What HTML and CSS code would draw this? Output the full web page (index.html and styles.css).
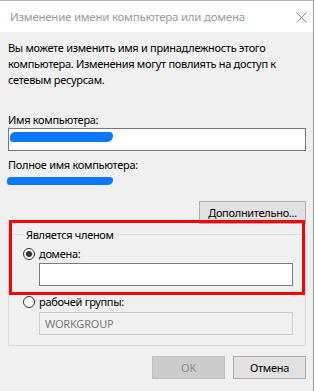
FILE: index.html
```html
<!DOCTYPE html>
<html lang="ru">
<head>
<meta charset="utf-8">
<link rel="stylesheet" href="styles.css">
</head>
<body>
<div class="window">
  <div class="titlebar">
    <span class="title">Изменение имени компьютера или домена</span>
    <svg class="close" width="11" height="11" viewBox="0 0 11 11"><path d="M0.5 0.5 L10.5 10.5 M10.5 0.5 L0.5 10.5" stroke="#8c8c8c" stroke-width="1" fill="none"/></svg>
  </div>
  <div class="body">
    <p class="intro">Вы можете изменить имя и принадлежность этого<br>компьютера. Изменения могут повлиять на доступ к<br>сетевым ресурсам.</p>
    <div class="label label-name">Имя компьютера:</div>
    <div class="input input-name"><span class="scribble scribble-a"></span></div>
    <div class="label label-full">Полное имя компьютера:</div>
    <div class="scribble scribble-b"></div>
    <div class="more-row"><button class="btn btn-more">Дополнительно...</button></div>
    <fieldset class="group">
      <legend class="legend">Является членом</legend>
      <div class="radio-row row-domain"><span class="radio checked"></span>домена:</div>
      <div class="input input-domain"></div>
      <div class="radio-row row-wg"><span class="radio"></span>рабочей группы:</div>
      <div class="input input-wg disabled">WORKGROUP</div>
    </fieldset>
    <div class="actions">
      <button class="btn btn-ok" disabled>OK</button>
      <button class="btn btn-cancel">Отмена</button>
    </div>
  </div>
  <div class="highlight"></div>
</div>
</body>
</html>
```

FILE: styles.css
```css
* { box-sizing: border-box; }
html, body { margin: 0; padding: 0; }
body {
  width: 314px;
  height: 391px;
  overflow: hidden;
  background: #f0f0f0;
  font-family: "Noto Sans", "Open Sans", sans-serif;
  font-size: 11px;
  letter-spacing: -0.3px;
  color: #000;
}
.window {
  position: relative;
  width: 314px;
  height: 391px;
  background: #f0f0f0;
  border-top: 1px solid #b4b4b4;
  border-right: 1px solid #9a9a9a;
}
.titlebar {
  height: 31px;
  background: #fff;
  display: flex;
  align-items: center;
  justify-content: space-between;
  padding: 0 6px 0 10px;
}
.title {
  font-size: 11.5px;
  color: #9a9a9a;
  letter-spacing: -0.25px;
}
.close { display: block; margin-top: 1px; }
.body {
  padding: 0 7px 0 8px;
}
.intro {
  margin: 8px 0 0;
  line-height: 16px;
}
.label {
  line-height: 16px;
}
.label-name { margin-top: 24px; }
.input {
  height: 23px;
  background: #fff;
  border: 1px solid #7a7a7a;
}
.input-name {
  padding: 3px 0 0 1px;
}
.scribble {
  display: block;
  background: #0b78ff;
  border-radius: 5px 4px 6px 3px;
}
.scribble-a { width: 103px; height: 10px; }
.label-full { margin-top: 6px; }
.scribble-b {
  margin: 4px 0 0 -1px;
  width: 106px;
  height: 8px;
}
.more-row {
  display: flex;
  justify-content: flex-end;
  margin-top: 16px;
}
.btn {
  height: 23px;
  background: #e1e1e1;
  border: 1px solid #adadad;
  font-family: inherit;
  font-size: 11px;
  letter-spacing: -0.3px;
  color: #000;
  padding: 0;
  margin: 0;
}
.btn-more { width: 107px; }
.group {
  margin: 4px 0 0;
  padding: 5px 12px 10px 14px;
  border: 1px solid #dcdcdc;
  min-width: 0;
}
.legend {
  padding: 0 2px;
  margin-left: 1px;
  line-height: 13px;
}
.radio-row {
  display: flex;
  align-items: center;
  height: 16px;
  line-height: 16px;
}
.radio {
  width: 12px;
  height: 12px;
  border: 1px solid #333;
  border-radius: 50%;
  background: #fff;
  margin-right: 4px;
  display: flex;
  align-items: center;
  justify-content: center;
}
.radio.checked::after {
  content: "";
  width: 6px;
  height: 6px;
  border-radius: 50%;
  background: #333;
}
.input-domain { margin: 1px 0 0 16px; }
.row-wg { margin-top: 8px; }
.input-wg {
  margin: 2px 0 0 16px;
  padding: 3px 0 0 5px;
  line-height: 15px;
  background: #f0f0f0;
  border-color: #cccccc;
  color: #7a7a7a;
  letter-spacing: -0.2px;
}
.actions {
  display: flex;
  justify-content: flex-end;
  gap: 8px;
  margin-top: 10px;
}
.btn-ok, .btn-cancel { width: 73px; }
.btn-ok {
  background: #cccccc;
  border-color: #bfbfbf;
  color: #8c8c8c;
}
.highlight {
  position: absolute;
  left: 9px;
  top: 219px;
  width: 296px;
  height: 75px;
  border: 3px solid #ff0000;
  pointer-events: none;
}
```
